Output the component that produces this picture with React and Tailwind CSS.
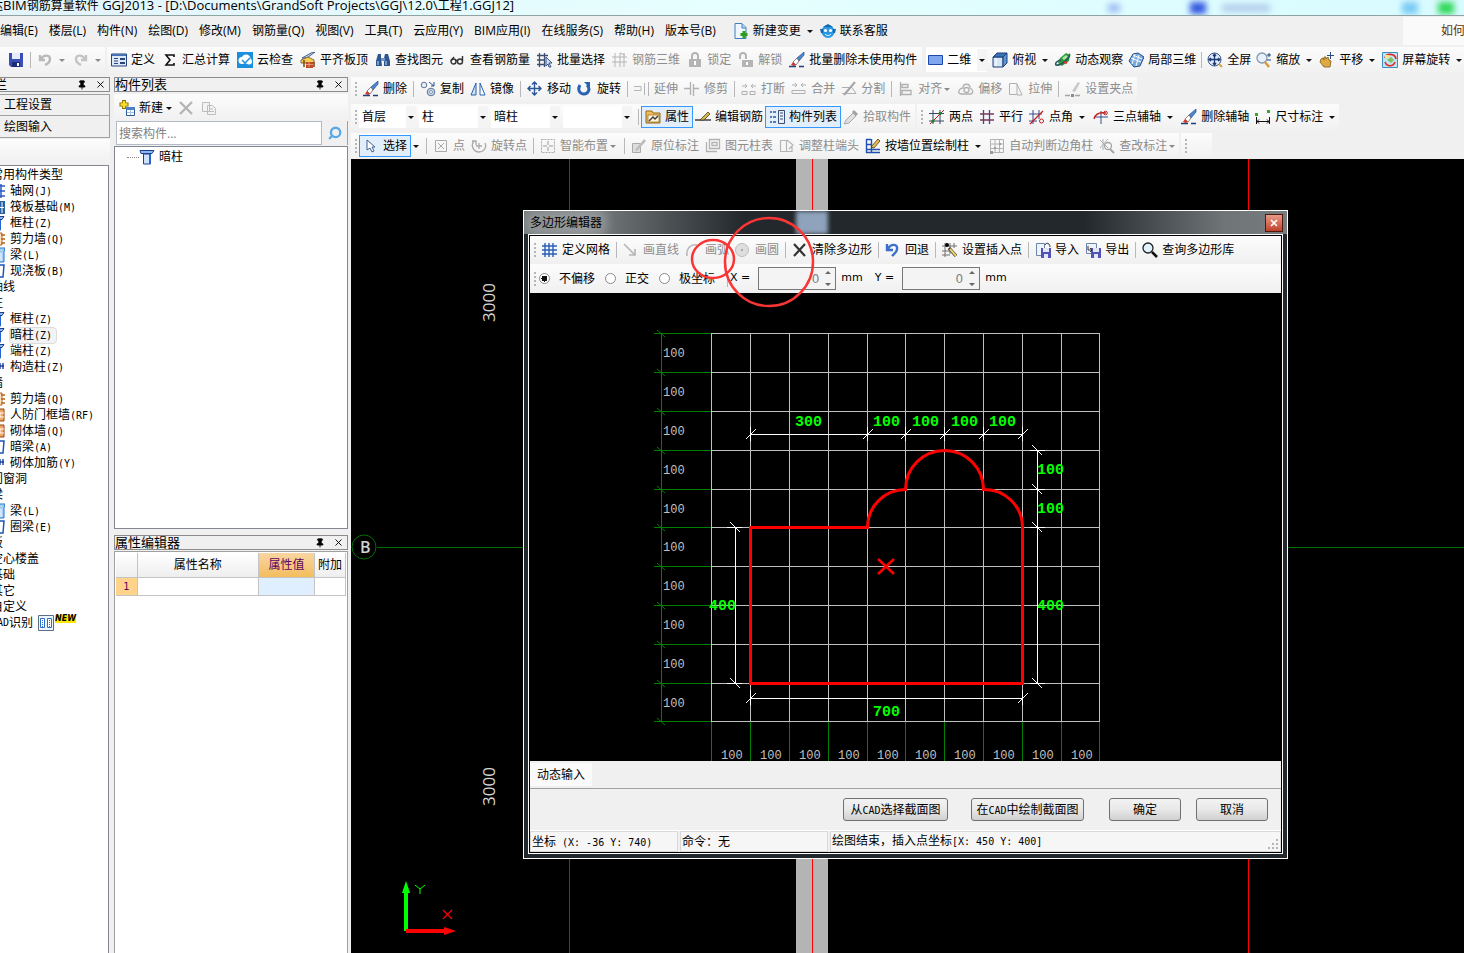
import { useState } from 'react'
import { Search, Pin, X } from 'lucide-react'

// 16x16 toolbar glyphs
const ICONS = {
  save: <><path d="M1 1h14v14H3l-2-2z" fill="#3a4fb5" /><path d="M4 1h8v6H4z" fill="#e8ecfa" /><path d="M4 10h8v5H4z" fill="#1d2c74" /><path d="M9 11h2v3H9z" fill="#fff" /></>,
  undoOff: <path d="M3 3v5h5M4 7c3-5 9-4 9 0 0 4-3 5-5 6" fill="none" stroke="#b9b9b9" strokeWidth="2.4" />,
  redoOff: <path d="M13 3v5H8M12 7C9 2 3 3 3 7c0 4 3 5 5 6" fill="none" stroke="#c4c4c4" strokeWidth="2.4" />,
  define: <><path d="M.5 2h15v12H.5z" fill="#dfe9f8" stroke="#27457d" /><path d="M1 2h14v2H1z" fill="#4872b5" /><path d="M3 6.500h4M3 9h4M3 11.500h4" stroke="#27457d" /><path d="M9 6h5v2H9zM9 10h5v2H9z" fill="#27457d" /></>,
  sigma: <path d="M12 5V3H4l4 5-4 5h8v-2" fill="none" stroke="#111" strokeWidth="1.600" />,
  cloud: <><path d="M0 0h16v16H0z" fill="#1c8ede" /><circle cx="5" cy="8.500" r="3.500" fill="#fff" /><circle cx="9" cy="7" r="4.500" fill="#fff" /><circle cx="12" cy="9.500" r="3" fill="#fff" /><path d="M5 8l3 3 5-5" fill="none" stroke="#1c8ede" strokeWidth="1.500" /></>,
  slab: <><path d="M2 6l9-5 4-1-8 6z" fill="#b9cdea" stroke="#27457d" strokeWidth=".8" /><path d="M1 8l7-3 6 3v3H1z" fill="#f6cf52" stroke="#6d4b10" strokeWidth=".8" /><path d="M4 8v7M14 10v5" stroke="#6d4b10" strokeWidth="1.500" /><path d="M6 10h7v6H6z" fill="#c24a26" /><path d="M6 12.500h7M9 10v5" stroke="#f0b49a" strokeWidth=".7" /></>,
  binoc: <><path d="M3 2h3v4l1 8H1V9zM10 2h3l2 7v5H9V6z" fill="#2f558f" /><path d="M6 6h4v3H6z" fill="#6f94c8" /><path d="M3 9v4M11 9v4" stroke="#cfe0f6" /></>,
  glasses: <g fill="none" stroke="#333" strokeWidth="1.400"><circle cx="3.500" cy="9.500" r="2.500" /><circle cx="10" cy="9.500" r="2.500" /><path d="M5 8.500h3M12.500 9V4M1 9l3-4" /></g>,
  batch: <><path d="M0 3.500h11M0 8h8M0 12.500h8M2.500 1v14M7.500 1v14" stroke="#3c4d6d" fill="none" strokeWidth="1.300" /><path d="M9 5l6 6h-3l2 4-2 0-1-3-2 2z" fill="#cfe0f6" stroke="#27457d" strokeWidth=".9" /></>,
  mesh: <path d="M0 5h15M0 10h15M3 1v14M8 1v14M12 1v14M8 1l5 2" stroke="#b5b5b5" fill="none" />,
  lock: <><path d="M2 7h12v8H2z" fill="#b4b4b4" /><path d="M5 7V4a3 3 0 0 1 6 0v3" fill="none" stroke="#b4b4b4" strokeWidth="2" /><path d="M8 9v4" stroke="#fff" strokeWidth="2" /></>,
  unlock: <><path d="M4 8h11v7H4z" fill="#b4b4b4" /><path d="M2 7V4a3 3 0 0 1 6 0v3" fill="none" stroke="#b4b4b4" strokeWidth="2" /><path d="M9 10v3" stroke="#fff" strokeWidth="2" /></>,
  brush: <><path d="M15 0L8 6l2 3 5-6z" fill="#4b86cf" stroke="#234d8c" strokeWidth=".7" /><path d="M8 6L4 10l3 3 3-4z" fill="#fff" stroke="#555" strokeWidth=".7" /><path d="M4 10l-2 3 3 1 2-1z" fill="#d9362b" /><path d="M0 14.500h7M10 14.500h5" stroke="#1f3f7c" strokeWidth="1.500" /></>,
  rect: <path d="M.5 3.500h14v9H.5z" fill="#7ea6ee" stroke="#1d47a8" />,
  cube: <><path d="M1 5h10v10H1z" fill="#d5e6f9" stroke="#1b3f78" /><path d="M1 5l4-4h10l-4 4z" fill="#3973b4" stroke="#1b3f78" /><path d="M11 5l4-4v10l-4 4z" fill="#5d94d1" stroke="#1b3f78" /><path d="M4 6v8" stroke="#fff" /></>,
  orbit: <><path d="M5 6l6-5 4 2-1 6-7 5-4-3z" fill="#2f9a3d" /><path d="M7 6l4-3 2 2-4 3z" fill="#a9e3a0" /><path d="M14 2C17 4 7 14 1 13c-2-2 3-5 5-5" fill="none" stroke="#235a5a" strokeWidth="1.600" /><path d="M9 10l3 1" stroke="#d9332a" strokeWidth="2" /></>,
  local3d: <><path d="M5 2l5-1 6 4-4 9-6 1-5-6z" fill="#79a9dc" stroke="#1d4c8a" /><path d="M7 2L4 12M11 3L8 14M3 6l10 4M5 3l9 4" stroke="#fff" fill="none" /></>,
  full: <><circle cx="7.500" cy="7.500" r="6.500" fill="#dbe9fa" stroke="#38588b" /><path d="M7.500 2v11M2 7.500h11M6 4l1.500-2L9 4M6 11l1.500 2L9 11M4 6L2 7.500 4 9M11 6l2 1.500L11 9" fill="none" stroke="#1d3970" strokeWidth="1.300" /><path d="M12 12l3 3" stroke="#d6a540" strokeWidth="2" /></>,
  zoom: <><circle cx="6" cy="6" r="5" fill="#e7f1fb" stroke="#8696ac" strokeWidth="1.300" /><path d="M9 10l4 5" stroke="#d39a3b" strokeWidth="2.400" /><path d="M13 1v4M11 3h4M11 8h4" stroke="#26457d" /></>,
  pan: <><path d="M2 7l2-1 1 2V5l2 0v2l2-2 1 3 2 1-1 6H5L1 10z" fill="#dda944" stroke="#805a15" strokeWidth=".8" /><path d="M11.500 0v7M8 3.500h7" stroke="#2b4c82" /></>,
  screen: <><path d="M.5.500h15v15H.5z" fill="#bfe4f7" stroke="#3a8fc2" /><path d="M3 6c1-5 10-5 11 1M13 10c-2 5-8 5-10 0" fill="none" stroke="#e12b20" strokeWidth="1.700" /><path d="M5 8l4-3 3 3-3 3z" fill="#7fc35c" /><path d="M3 3h4v3H3z" fill="#f7e08a" /></>,
  copy: <><circle cx="4" cy="4" r="2.800" fill="#e5edf7" stroke="#5b7597" /><circle cx="11" cy="11" r="3.800" fill="#c9d6e8" stroke="#5b7597" /><circle cx="11" cy="11" r="1.500" fill="#fff" stroke="#5b7597" strokeWidth=".7" /><path d="M9 1l5 4M14 1v4h-3" stroke="#274f90" fill="none" /></>,
  mirror: <><path d="M6 2v12H1z" fill="#cfe0f6" stroke="#2a63ae" /><path d="M10 2v12h5z" fill="#fff" stroke="#2a63ae" /></>,
  move: <path d="M7.500 1v13M1 7.500h13M5 3.500L7.500 1 10 3.500M5 11.500L7.500 14l2.500-2.500M3.500 5L1 7.500 3.500 10M11.500 5L14 7.500 11.500 10" fill="none" stroke="#2b5697" strokeWidth="1.400" />,
  rotate: <><path d="M3 4C0 9 3 13 7 13s7-5 3-9" fill="none" stroke="#2862b5" strokeWidth="3" /><path d="M7 1h6v6z" fill="#2862b5" /></>,
  extend: <path d="M0 5.500h7v4H0M10.500 2v12M14.500 1v14" fill="none" stroke="#b5b5b5" />,
  trim: <path d="M0 7.500h6M10 7.500h5M6.500 1v13M9.500 3v12" fill="none" stroke="#b0b0b0" strokeWidth="1.300" />,
  breakI: <path d="M1 5h5M4 3L6 5 4 7M15 5h-5M12 3l-2 2 2 2M1 10.500h5v3H1zM9 10.500h5v3H9z" fill="none" stroke="#b0b0b0" />,
  merge: <path d="M1 4h5M4 2l2 2-2 2M15 4h-5M12 2l-2 2 2 2M1 9.500h13v3H1z" fill="none" stroke="#b0b0b0" />,
  split: <><path d="M1 6.500h10M1 12.500h14M11 6.500l4 6" fill="none" stroke="#b0b0b0" /><path d="M3 14L14 1" stroke="#a5a5a5" strokeWidth="2" /></>,
  align: <path d="M2.500 1v14M4 3.500h6v3H4zM4 9.500h9v4H4z" fill="none" stroke="#b0b0b0" strokeWidth="1.300" />,
  offset: <g fill="none" stroke="#b0b0b0" strokeWidth="1.300"><path d="M1 12c-1-4 3-5 4-5 0-5 7-5 7 0 3 1 4 6 0 6H3z" /><circle cx="8.500" cy="9" r="2.500" /></g>,
  stretch: <path d="M9 2.500H1.500v11H9M9 3l5 11H9z" fill="none" stroke="#b0b0b0" />,
  grip: <><path d="M0 14.500h5M10 14.500h5" stroke="#a5a5a5" strokeWidth="1.400" /><path d="M6 13h3v3H6z" fill="#8c8c8c" /><path d="M7 10l6-9 2 1-5 9z" fill="#c9c9c9" /></>,
  props: <><path d="M1 2h6l1 2h7v10H1z" fill="#f3bd58" stroke="#94681a" /><path d="M3 6h11v7H3z" fill="#fff6dc" stroke="#94681a" strokeWidth=".7" /><path d="M4 12l4-4 2 2 3-3" stroke="#3f3f3f" strokeWidth="1.500" fill="none" /></>,
  rebar: <><path d="M0 11h16" stroke="#222" strokeWidth="1.300" fill="none" /><path d="M5 11l8-8 2 2-6 6z" fill="#d0b454" stroke="#503f12" strokeWidth=".8" /></>,
  list: <><path d="M1 3h2M1 8h2M1 13h2M4 3h3M4 8h3M4 13h3" stroke="#2754a8" strokeWidth="1.500" /><path d="M9.500 1.500h6v13h-6z" fill="#e7effb" stroke="#3a4d74" /><path d="M11 4h3M11 7h3M11 10h3" stroke="#3a4d74" /></>,
  pick: <><path d="M1 15l2-4 7-7 3 3-7 7z" fill="#e0e0e0" stroke="#a8a8a8" /><path d="M9 3l2-2 4 4-2 2z" fill="#a2a2a2" /></>,
  twoPt: <><path d="M0 4.500h15M0 12h15M4 1v14M11 1v14" stroke="#3b4a6b" /><path d="M1 15L15 1" stroke="#c41f1f" /><circle cx="4" cy="12" r="1.600" fill="#237b23" /><circle cx="11" cy="4.500" r="1.600" fill="#237b23" /></>,
  parallel: <><path d="M4.500 1v14M10.500 1v14" stroke="#3a4b8a" strokeWidth="1.300" /><path d="M1 5h14M1 11h14" stroke="#7a3a5a" strokeWidth="1.300" /></>,
  ptAngle: <><path d="M0 5h13M4 1v14M0 12h8M10 1v9" stroke="#3b4a8b" /><path d="M1 15L14 2" stroke="#c41f1f" fill="none" strokeWidth="1.200" /><circle cx="12.500" cy="12" r="2" fill="none" stroke="#c41f1f" /></>,
  threePt: <><path d="M8 2v13M1 8h14" stroke="#3b4a8b" /><path d="M1 10C2 5 6 3 13 4" stroke="#c41f1f" fill="none" strokeWidth="1.300" /><circle cx="12.500" cy="4" r="1.800" fill="none" stroke="#c41f1f" /></>,
  dim: <><path d="M1.500 8v7M14.500 8v7M2 12.500h12M4 10.500l-2 2 2 2M12 10.500l2 2-2 2" fill="none" stroke="#111" /><path d="M0 4h3v3H0zM12 1h3v3h-3z" fill="#35a835" /></>,
  cursor: <path d="M4 2v10l3-2 2 4 2-1-2-4h3z" fill="#fff" stroke="#3f5f92" />,
  point: <path d="M2.500 2.500h11v11h-11zM5 5l6 6M11 5l-6 6" fill="none" stroke="#a9a9a9" />,
  rotPt: <path d="M3 3c-4 5 0 11 5 11s8-5 6-9M1 3h4v4M8 5v6M5 8h6" fill="none" stroke="#a9a9a9" strokeWidth="1.300" />,
  smart: <><path d="M1.500 1.500h13v13h-13z" fill="none" stroke="#a9a9a9" strokeDasharray="2 1" /><path d="M8 3v4M8 9v4M3 8h4M9 8h4" stroke="#999" /></>,
  inplace: <><path d="M1.500 5.500h8v9h-8z" fill="#ddd" stroke="#aaa" /><path d="M4 12l9-11 2 2-9 10z" fill="#bcbcbc" /></>,
  colTable: <path d="M4.500 1.500h10v9h-10zM7 4.500h5v3H7zM1.500 4v9.500H12M1 13.500h3" fill="none" stroke="#b2b2b2" strokeWidth="1.300" />,
  colEnd: <path d="M1.500 2.500h6v11h-6zM8 2l6 5-4 4M2 13.500h11V8" fill="none" stroke="#b5b5b5" strokeWidth="1.200" />,
  wallCol: <><path d="M1.500 1v14M6.500 1v14M1 1.500h5M1 6.500h5M1 11.500h14M1 14.500h14" stroke="#1f4fb0" fill="none" strokeWidth="1.400" /><path d="M6 9l7-8 2 2-6 7z" fill="#e5bd50" stroke="#4a3a12" strokeWidth=".8" /></>,
  autoCol: <><path d="M1.500 1.500h13v13h-13zM1 6h14M1 10.500h14M6 1v14M10.500 1v14" fill="none" stroke="#b2b2b2" /><path d="M5 9h2v2H5zM10 5h2v2h-2zM1 13h3v3H1z" fill="#9a9a9a" /></>,
  review: <><path d="M1 2l8 8M9 1L1 10M4 1v11" stroke="#b2b2b2" /><circle cx="9" cy="8" r="3.500" fill="none" stroke="#a5a5a5" strokeWidth="1.300" /><path d="M11 11l4 4" stroke="#a5a5a5" strokeWidth="2" /></>,
  newDoc: <><path d="M2 .500h7l4 4v11H2z" fill="#eef6ff" stroke="#3f7fbd" /><path d="M9 1v4h4" fill="#bcd9f3" stroke="#3f7fbd" /><path d="M11 8v7M7.500 11.500h7" stroke="#2f9c1c" strokeWidth="3" /></>,
  service: <><circle cx="8" cy="8.500" r="6.500" fill="#2a97e3" /><path d="M0 6h3v4H1zM13 6h3l-1 4h-2zM3 4l5-3 5 3z" fill="#1467ac" /><circle cx="5.500" cy="7.500" r="1.600" fill="#fff" /><circle cx="10.500" cy="7.500" r="1.600" fill="#fff" /><path d="M5 11c2 2 4 2 6 0" stroke="#fff" fill="none" /></>,
  newComp: <><path d="M5 0v9M.500 4.500h9" stroke="#8a6d00" strokeWidth="4" /><path d="M5 1v7M1.500 4.500h7" stroke="#f8dd2e" strokeWidth="2.400" /><path d="M7.500 7.500h8v8h-8z" fill="#fff" stroke="#2b5697" /><path d="M7 7h9v3H7z" fill="#4b80c7" /><path d="M8 12.500h7M11.500 10v5" stroke="#a9c1e2" /></>,
  del: <path d="M2 2l12 12M14 2L2 14" stroke="#b5b5b5" strokeWidth="2.400" />,
  dup: <path d="M1.500 2.500h7v9h-7zM6.500 5.500h5l3 3v6h-8zM8 9h4M8 11.500h5" fill="#f3f3f3" stroke="#bdbdbd" />,
  column: <><path d="M1 1.500h14l-2 3H2z" fill="#8db8ee" stroke="#1c3f8f" /><path d="M4.500 5h7v10h-7z" fill="#cfe2fb" stroke="#1c3f8f" /><path d="M11 5v10" stroke="#2864cf" strokeWidth="2" /></>,
  axis: <path d="M2 1v14M7 1v14M12 1v14M0 3h16M0 8h16M0 13h16" stroke="#2c5cc4" strokeWidth="1.500" />,
  raft: <><path d="M0 2h16v13H0z" fill="#2a5f9e" /><path d="M4 3v11M9 3v11M13 3v11M1 8.500h14" stroke="#fff" /></>,
  wall: <><path d="M1 2h12v12H1z" fill="#fbe3c4" stroke="#b5651a" /><path d="M12 4h4M12 8h4M12 12h4" stroke="#b5651a" strokeWidth="1.500" /></>,
  brick: <><path d="M1 2h14v12H1z" fill="#f2a766" stroke="#8a4512" /><path d="M1 6h14M1 10h14M6 2v4M11 6v4M6 10v4" stroke="#fff" /></>,
  beam: <><path d="M2 3l4-2h10l-1 4v10H9V6H2z" fill="#a8d0f5" stroke="#2279c9" /><path d="M12 6v8" stroke="#fff" /></>,
  plate: <path d="M3 2h12l-1 12H1z" fill="#fff" stroke="#1c55b5" strokeWidth="1.500" />,
  conn: <path d="M0 7h15M7 2v12M11 4v6M14 4v6" stroke="#1c3fa0" strokeWidth="1.400" />,
  cad: <><path d="M.5.500h15v15H.5z" fill="#eef4fc" stroke="#5d6d85" /><path d="M2.500 3.500h4v9h-4zM9.500 3.500h4v9h-4z" fill="#fff" stroke="#2c6fc7" /><path d="M4.500 5v7M11.500 5v7" stroke="#2c6fc7" strokeDasharray="1 1" /></>,
  gridDef: <path d="M3 1v14M7 1v14M11 1v14M0 4h15M0 8h15M0 12h15" stroke="#2b5fb5" strokeWidth="1.400" />,
  line: <path d="M1 2l11 11M12 7v6H6" fill="none" stroke="#b5b5b5" strokeWidth="1.600" />,
  arc: <path d="M2 14C1 7 5 2 12 3" fill="none" stroke="#b5b5b5" strokeWidth="1.500" />,
  circle: <><circle cx="7" cy="8" r="6.500" fill="#dedede" stroke="#bcbcbc" /><circle cx="7" cy="8" r="1" fill="#999" /></>,
  clear: <path d="M2 2l11 12M13 2L2 14" stroke="#333" strokeWidth="2.200" />,
  back: <path d="M2 2v6h6M3 7C6 1 13 2 12 7c0 3-3 5-5 7" fill="none" stroke="#3a70cc" strokeWidth="2.400" />,
  insert: <><path d="M0 4h15M0 9h10M0 13h8M3 1v14M8 1v11M12 1v5" stroke="#707070" /><circle cx="5" cy="3" r="2" fill="#000" /><path d="M7 6l7 8" stroke="#3b3b3b" strokeWidth="3.400" /><path d="M8 7l6 7" stroke="#eed163" strokeWidth="2" /></>,
  importI: <><path d="M1.500 1.500h8v12h-8z" fill="#eef3fa" stroke="#6f86a8" /><path d="M6 6h10v10H6z" fill="#5252b5" /><path d="M8 6h6v4H8zM9 12h4v4H9z" fill="#e4e4f8" /><path d="M10 3c1-3 5-2 5 2" fill="none" stroke="#333" /></>,
  exportI: <><path d="M1.500 1.500h10v10h-10z" fill="#eef3fa" stroke="#6f86a8" /><path d="M6 6h10v10H6z" fill="#5252b5" /><path d="M8 6h6v4H8zM9 12h4v4H9z" fill="#e4e4f8" /><path d="M3 4v4h4M5 6l2 2-2 2" fill="none" stroke="#333" /></>,
  query: <><circle cx="6" cy="6" r="5" fill="#dff3fc" stroke="#222" strokeWidth="1.300" /><path d="M10 10l5 5" stroke="#111" strokeWidth="2.600" /></>,
}

function Icon({ name }) {
  return (
    <svg width="16" height="16" viewBox="0 0 16 16" className="shrink-0" aria-hidden="true">
      {ICONS[name]}
    </svg>
  )
}

function Caret({ off }) {
  return (
    <svg width="10" height="16" viewBox="0 0 10 16" className="shrink-0" aria-hidden="true">
      <path d="M2 7h6L5 10z" fill={off ? '#8a8a8a' : '#111'} />
    </svg>
  )
}

function Tool({ icon, label, off, caret, active }) {
  return (
    <button
      type="button"
      disabled={off}
      className={`flex shrink-0 items-center gap-1 ${off ? 'text-[#8d8d8d]' : 'text-black'} ${active ? 'h-[22px] -mx-1 border border-[#3399ff] bg-[#e2eefa] px-[3px]' : ''}`}
    >
      {icon && <Icon name={icon} />}
      {label}
      {caret && <span className={off ? '-ml-1' : ''}><Caret off={off} /></span>}
    </button>
  )
}

const Sep = () => <div className="h-4 w-px shrink-0 bg-[#b8b8b8]" />

const Grip = () => (
  <div className="flex w-[2px] shrink-0 flex-col gap-[2px]">
    <i className="h-[2px] bg-[#b5b5b5]" />
    <i className="h-[2px] bg-[#b5b5b5]" />
    <i className="h-[2px] bg-[#b5b5b5]" />
    <i className="h-[2px] bg-[#b5b5b5]" />
  </div>
)

// '|' is a separator, everything else is [icon, label, flags]
function Tools({ items }) {
  return items.map((t, i) =>
    t === '|' ? <Sep key={i} /> : (
      <Tool key={i} icon={t[0]} label={t[1]} off={t[2]?.includes('off')} caret={t[2]?.includes('caret')} active={t[2]?.includes('active')} />
    )
  )
}

function Combo({ label, value, className }) {
  return (
    <div className={`relative flex h-[22px] shrink-0 items-center bg-white ${className}`}>
      <select aria-label={label} className="h-full w-full appearance-none bg-transparent pl-[3px] text-xs outline-none">
        <option>{value}</option>
      </select>
      <span className="pointer-events-none absolute inset-y-0 right-0 flex items-center bg-[#f4f4f4]">
        <Caret />
      </span>
    </div>
  )
}

// half-width characters take a 6px cell beside 12px ideographs
function Song({ children }) {
  return children.split(/([\x20-\x7e]+)/).map((part, i) =>
    i % 2 ? <span key={i} className="whitespace-pre font-['DejaVu_Sans_Mono',monospace] text-[10px]">{part}</span> : part
  )
}

function PanelHead({ title, className = '' }) {
  return (
    <div className={`flex h-[15px] shrink-0 items-center border border-[#8c8c8c] bg-[#f0f0f0] ${className}`}>
      <span className="flex-1 whitespace-nowrap text-[13px] leading-[13px]">{title}</span>
      <button type="button" aria-label="固定" className="mr-2"><Pin size={10} fill="#000" /></button>
      <button type="button" aria-label="关闭" className="mr-[3px]"><X size={11} strokeWidth={2} /></button>
    </div>
  )
}

const MENUS = ['编辑(E)', '楼层(L)', '构件(N)', '绘图(D)', '修改(M)', '钢筋量(Q)', '视图(V)', '工具(T)', '云应用(Y)', 'BIM应用(I)', '在线服务(S)', '帮助(H)', '版本号(B)']

const MAIN_TOOLS = [
  ['define', '定义'], ['sigma', '汇总计算'], ['cloud', '云检查'], ['slab', '平齐板顶'], ['binoc', '查找图元'],
  ['glasses', '查看钢筋量'], ['batch', '批量选择'], ['mesh', '钢筋三维', 'off'], ['lock', '锁定', 'off'],
  ['unlock', '解锁', 'off'], ['brush', '批量删除未使用构件'],
]
const VIEW_TOOLS = [
  ['cube', '俯视', 'caret'], ['orbit', '动态观察'], ['local3d', '局部三维'], '|', ['full', '全屏'],
  ['zoom', '缩放', 'caret'], ['pan', '平移', 'caret'], ['screen', '屏幕旋转', 'caret'],
]
const EDIT_TOOLS = [
  ['brush', '删除'], '|', ['copy', '复制'], ['mirror', '镜像'], '|', ['move', '移动'], ['rotate', '旋转'], '|',
  ['extend', '延伸', 'off'], ['trim', '修剪', 'off'], '|', ['breakI', '打断', 'off'], ['merge', '合并', 'off'],
  ['split', '分割', 'off'], '|', ['align', '对齐', 'off caret'], ['offset', '偏移', 'off'], ['stretch', '拉伸', 'off'],
  '|', ['grip', '设置夹点', 'off'],
]
const COMP_TOOLS = [['props', '属性', 'active'], ['rebar', '编辑钢筋'], ['list', '构件列表', 'active'], ['pick', '拾取构件', 'off']]
const AXIS_TOOLS = [
  ['twoPt', '两点'], ['parallel', '平行'], ['ptAngle', '点角', 'caret'], ['threePt', '三点辅轴', 'caret'],
  ['brush', '删除辅轴'], ['dim', '尺寸标注', 'caret'],
]
const DRAW_TOOLS = [
  '|', ['point', '点', 'off'], ['rotPt', '旋转点', 'off'], '|', ['smart', '智能布置', 'off caret'], '|',
  ['inplace', '原位标注', 'off'], ['colTable', '图元柱表', 'off'], ['colEnd', '调整柱端头', 'off'],
  ['wallCol', '按墙位置绘制柱', 'caret'], ['autoCol', '自动判断边角柱', 'off'], ['review', '查改标注', 'off caret'],
]
const POLY_TOOLS = [
  ['gridDef', '定义网格'], '|', ['line', '画直线', 'off'], ['arc', '画弧', 'off'], ['circle', '画圆', 'off'], '|',
  ['clear', '清除多边形'], '|', ['back', '回退'], '|', ['insert', '设置插入点'], '|', ['importI', '导入'],
  ['exportI', '导出'], '|', ['query', '查询多边形库'],
]

const NAV = [
  [null, '常用构件类型'], ['axis', '轴网(J)'], ['raft', '筏板基础(M)'], ['column', '框柱(Z)'], ['wall', '剪力墙(Q)'],
  ['beam', '梁(L)'], ['plate', '现浇板(B)'], [null, '轴线'], [null, '柱'], ['column', '框柱(Z)'],
  ['column', '暗柱(Z)', true], ['column', '端柱(Z)'], ['conn', '构造柱(Z)'], [null, '墙'], ['wall', '剪力墙(Q)'],
  ['brick', '人防门框墙(RF)'], ['brick', '砌体墙(Q)'], ['plate', '暗梁(A)'], ['conn', '砌体加筋(Y)'], [null, '门窗洞'],
  [null, '梁'], ['beam', '梁(L)'], ['plate', '圈梁(E)'], [null, '板'], [null, '空心楼盖'], [null, '基础'],
  [null, '其它'], [null, '自定义'],
]

const GX = [181, 220, 259, 298, 337, 375, 414, 453, 492, 531, 569]
const GY = [40, 79, 118, 157, 196, 234, 273, 312, 351, 390, 428]

function PolygonCanvas() {
  const dimText = "fill-[#00ff00] font-['Liberation_Mono',monospace] text-[15px] font-bold"
  const topDims = [220, 337, 375, 414, 453, 492]
  const rightDims = [157, 196, 234, 390]
  return (
    <svg viewBox="0 0 751 468" className="block h-[468px] w-full bg-black">
      <g stroke="#c0c0c0" shapeRendering="crispEdges">
        {GX.map((x) => <path key={x} d={`M${x + 0.5} 40V429`} />)}
        {GY.map((y) => <path key={y} d={`M181 ${y + 0.5}H570`} />)}
      </g>
      <g stroke="#008000" fill="none">
        <path d="M131.500 40V429" shapeRendering="crispEdges" />
        {GY.map((y) => <path key={y} d={`M124 ${y + 0.5}H181`} shapeRendering="crispEdges" />)}
        {GY.map((y) => <path key={y} d={`M127 ${y - 3}l8 7`} />)}
        {GX.map((x) => <path key={x} d={`M${x + 0.5} 429V468`} shapeRendering="crispEdges" />)}
      </g>
      <g className="fill-[#c0c0c0] font-['Liberation_Mono',monospace] text-[12px]">
        {GY.slice(0, 10).map((y) => <text key={y} x="133" y={y + 24}>100</text>)}
        {GX.slice(0, 10).map((x) => <text key={x} x={x + 10} y="466">100</text>)}
      </g>
      <g stroke="#fff" fill="none">
        <path d="M220 141.500H493M220 405.500H493M205.500 234V391M507.500 157V391" shapeRendering="crispEdges" />
        {topDims.map((x) => <path key={x} d={`M${x + 0.5} 134v14M${x - 4} 146l10-10`} />)}
        {[220, 492].map((x) => <path key={x} d={`M${x + 0.5} 397v15M${x - 4} 410l10-10`} />)}
        {rightDims.map((y) => <path key={y} d={`M500 ${y + 0.5}h15M502 ${y - 5}l10 10`} />)}
        {[234, 390].map((y) => <path key={y} d={`M197 ${y + 0.5}h15M200 ${y - 5}l10 10`} />)}
      </g>
      <path
        d="M220.500 234.500H337.500A38 38 0 0 1 375.500 196.500A39 39 0 0 1 453.500 196.500A38 38 0 0 1 492.500 234.500V390.500H220.500Z"
        fill="none" stroke="#f00" strokeWidth="3"
      />
      <path d="M348 266l16 15M364 266l-16 15" stroke="#f00" strokeWidth="2.500" />
      <g className={dimText}>
        <text x="265" y="133">300</text>
        {[343, 382, 421, 459].map((x) => <text key={x} x={x} y="133">100</text>)}
        <text x="507" y="181">100</text>
        <text x="507" y="220">100</text>
        <text x="507" y="317">400</text>
        <text x="179" y="317">400</text>
        <text x="343" y="423">700</text>
      </g>
    </svg>
  )
}

function NumberField({ id, label, value, onChange }) {
  return (
    <>
      <label htmlFor={id} className="whitespace-pre">{label} =</label>
      <span className="ml-2 mr-[5px] flex h-[23px] w-[78px] items-center border border-[#777] bg-[#f4f4f4]">
        <input
          id={id}
          value={value}
          onChange={(e) => onChange(e.target.value)}
          className="h-full w-full min-w-0 flex-1 bg-transparent text-right text-xs text-[#808080] outline-none"
        />
        <svg width="16" height="21" viewBox="0 0 16 21" className="shrink-0 fill-[#666]" aria-hidden="true">
          <path d="M6 6h6L9 3zM6 15h6l-3 3z" />
        </svg>
      </span>
      <span>mm</span>
    </>
  )
}

function DialogButton({ children, className }) {
  return (
    <button
      type="button"
      className={`h-[23px] whitespace-nowrap rounded-[3px] border border-[#707070] bg-gradient-to-b from-[#f3f3f3] via-[#e8e8e8] to-[#d0d0d0] ${className}`}
    >
      <Song>{children}</Song>
    </button>
  )
}

function PolygonDialog() {
  const [mode, setMode] = useState('不偏移')
  const [x, setX] = useState('0')
  const [y, setY] = useState('0')
  return (
    <section
      aria-label="多边形编辑器"
      className="absolute left-[172px] top-[51px] w-[765px] border border-white bg-[#22282b] px-1 pb-1"
    >
      <header className="relative -mx-1 flex h-[23px] items-center justify-between overflow-hidden bg-[linear-gradient(90deg,#6f7577_0,#7b8082_60px,#22282b_220px,#22282b_560px,#6f7477_700px,#777c7e_100%)] pl-[6px] pr-1">
        <span className="absolute inset-y-0 left-[272px] w-8 bg-[#8fa3bd] blur-[2px]" />
        <h2 className="relative rounded bg-white/20 text-xs shadow-[0_0_8px_6px_rgba(255,255,255,0.2)]">多边形编辑器</h2>
        <button type="button" aria-label="关闭" className="flex h-[18px] w-[18px] items-center justify-center border border-[#4d1a12] bg-gradient-to-b from-[#e79a87] to-[#c0402a] text-white">
          <X size={10} strokeWidth={4} />
        </button>
      </header>
      <div className="border border-white">
        <div className="border border-black bg-[#f0f0f0]">
          <div className="flex h-7 items-center gap-[6px] overflow-hidden whitespace-nowrap bg-gradient-to-b from-[#fcfcfc] to-[#f0f0f0] pl-1">
            <Grip />
            <Tools items={POLY_TOOLS} />
          </div>
          <div className="flex h-[29px] items-center whitespace-nowrap bg-gradient-to-b from-[#fcfcfc] to-[#f0f0f0] pl-1">
            <Grip />
            <div className="ml-[3px] flex gap-[10px]">
              {['不偏移', '正交', '极坐标'].map((m) => (
                <label key={m} className="flex items-center gap-[9px]">
                  <input
                    type="radio"
                    name="offset"
                    checked={mode === m}
                    onChange={() => setMode(m)}
                    className="h-[11px] w-[11px] appearance-none rounded-full border border-[#8a8a8a] bg-white checked:bg-[radial-gradient(circle,#111_0,#111_3px,#fff_3px)]"
                  />
                  {m}
                </label>
              ))}
            </div>
            <div className="ml-3 mr-[2px] h-4 w-px bg-[#b8b8b8]" />
            <div className="flex items-center font-['DejaVu_Sans',sans-serif] text-[11px]">
              <NumberField id="off-x" label="X" value={x} onChange={setX} />
              <span className="w-3" />
              <NumberField id="off-y" label="Y" value={y} onChange={setY} />
            </div>
          </div>
          <PolygonCanvas />
          <div className="flex h-7 items-center border-b border-[#a0a0a0]">
            <button type="button" className="h-[23px] bg-[#fafafa] px-[7px]">动态输入</button>
          </div>
          <div className="flex h-[41px] items-center justify-end pr-[13px]">
            <DialogButton className="w-[105px]">从CAD选择截面图</DialogButton>
            <DialogButton className="ml-[23px] w-[113px]">在CAD中绘制截面图</DialogButton>
            <DialogButton className="ml-[25px] w-[72px]">确定</DialogButton>
            <DialogButton className="ml-[15px] w-[72px]">取消</DialogButton>
          </div>
          <footer className="flex h-[22px] items-stretch gap-[2px] border-t border-white text-xs leading-[19px]">
            <div className="w-[148px] border border-[#d9d9d9] bg-[#f6f6f6] pl-px"><Song>坐标 (X: -36 Y: 740)</Song></div>
            <div className="w-[148px] border border-[#d9d9d9] bg-[#f6f6f6] pl-px"><Song>命令：无</Song></div>
            <div className="flex flex-1 items-end justify-between border border-[#d9d9d9] bg-[#f6f6f6] pl-px">
              <span><Song>绘图结束，插入点坐标[X: 450 Y: 400]</Song></span>
              <svg width="12" height="12" viewBox="0 0 12 12" className="fill-[#b5b5b5]" aria-hidden="true">
                <path d="M8 0h2v2H8zM4 4h2v2H4zM8 4h2v2H8zM0 8h2v2H0zM4 8h2v2H4zM8 8h2v2H8z" />
              </svg>
            </div>
          </footer>
        </div>
      </div>
      {/* hand-drawn marks over the arc and circle tools */}
      <svg width="130" height="96" viewBox="0 0 130 96" className="pointer-events-none absolute left-[164px] top-[4px]" fill="none" stroke="#f93535" strokeWidth="2.500" aria-hidden="true">
        <ellipse cx="25" cy="44" rx="21" ry="19" />
        <circle cx="81" cy="47" r="44" />
      </svg>
    </section>
  )
}

function Workspace() {
  return (
    <main className="relative mt-px min-h-[794px] flex-1 overflow-hidden bg-black">
      <svg width="100%" height="100%" className="absolute inset-0" aria-hidden="true">
        <rect x="445" y="0" width="32" height="100%" fill="#b4b4b4" />
        <g shapeRendering="crispEdges">
          <line x1="461.500" x2="461.500" y1="0" y2="100%" stroke="#f00" />
          <line x1="897.500" x2="897.500" y1="0" y2="100%" stroke="#f00" />
          <line x1="218.500" x2="218.500" y1="0" y2="100%" stroke="#007000" />
          <line x1="26" x2="100%" y1="388.500" y2="388.500" stroke="#007000" />
        </g>
        <circle cx="13" cy="388" r="12" fill="none" stroke="#007000" />
        <g className="fill-[#d4d4d4] font-['Open_Sans',sans-serif]">
          <text x="9" y="394" className="text-[16px] font-semibold">B</text>
          <text transform="translate(144 163) rotate(-90)" className="text-[17px]">3000</text>
          <text transform="translate(144 647) rotate(-90)" className="text-[17px]">3000</text>
        </g>
        <path d="M55 772v-40" stroke="#0f0" strokeWidth="4" />
        <path d="M55 722l4 12h-8z" fill="#0f0" />
        <path d="M55 772h38" stroke="#f00" strokeWidth="4" />
        <path d="M105 772l-12 4v-8z" fill="#f00" />
        <path d="M64 726l5 4 5-4M69 730v5" stroke="#0f0" fill="none" />
        <path d="M92 751l9 9M101 751l-9 9" stroke="#ff0000" strokeWidth="1.200" fill="none" />
      </svg>
      <PolygonDialog />
    </main>
  )
}

export default function App() {
  const strip = 'flex items-center bg-gradient-to-b from-[#fcfcfc] to-[#f1f1f1]'
  return (
    <div className="flex min-h-screen flex-col overflow-hidden bg-[#f0f0f0] font-['Open_Sans','Noto_Sans_CJK_SC',sans-serif] text-xs text-black">
      <header className="relative flex h-4 items-center overflow-hidden whitespace-nowrap border-b border-[#8fa3a3] bg-gradient-to-r from-[#e3f4fb] via-[#e6ffff] to-[#d8fbff]">
        <h1 className="-ml-[9px] -mt-1 text-[13px]"><span className="text-xs">达</span>BIM<span className="text-xs">钢筋算量软件</span> GGJ2013 - [D:\Documents\GrandSoft Projects\GGJ\12.0\<span className="text-xs">工程</span>1.GGJ12]</h1>
        <div className="ml-auto mr-[10px] flex items-center blur-[3px]" aria-hidden="true">
          <i className="h-2 w-3 bg-[#9ab8f0]" />
          <i className="ml-[70px] h-3 w-4 bg-[#3358e0]" />
          <i className="ml-4 h-2 w-12 bg-[#b4cdea]" />
          <i className="ml-[132px] h-3 w-4 bg-[#79c9f5]" />
          <i className="ml-5 h-3 w-4 bg-[#2fd858]" />
        </div>
      </header>

      <nav className="flex h-[30px] items-center gap-[11px] overflow-hidden whitespace-nowrap">
        {MENUS.map((m) => <button key={m} type="button" className="shrink-0">{m}</button>)}
        <span className="ml-[6px]"><Tool icon="newDoc" label="新建变更" caret /></span>
        <span className="-ml-[6px]"><Tool icon="service" label="联系客服" /></span>
        <a href="#help" className="-mr-px ml-auto flex h-7 shrink-0 items-center bg-[#fafafa] pl-[38px] text-[#663300]">如何</a>
      </nav>

      <div className="mt-px flex h-[26px] overflow-hidden whitespace-nowrap">
        <div className={`${strip} w-[105px] shrink-0 gap-[6px] pl-2`}>
          <button type="button" aria-label="保存"><Icon name="save" /></button>
          <Sep />
          <button type="button" aria-label="撤销" disabled className="flex gap-1"><Icon name="undoOff" /><Caret off /></button>
          <button type="button" aria-label="重做" disabled className="flex gap-1"><Icon name="redoOff" /><Caret off /></button>
        </div>
        <div className={`${strip} ml-[2px] shrink-0 gap-[7px] pl-1 pr-[5px]`}>
          <Tools items={MAIN_TOOLS} />
        </div>
        <div className={`${strip} ml-1 min-w-0 grow gap-[5px]`}>
          <div className="flex h-6 items-center bg-white pl-[2px]">
            <Icon name="rect" />
            <Combo label="视图模式" value="二维" className="w-[43px]" />
          </div>
          <Tools items={VIEW_TOOLS} />
        </div>
      </div>

      <div className="mt-1 flex flex-1">
        {/* navigation */}
        <aside className="flex w-[110px] shrink-0 flex-col overflow-hidden">
          <PanelHead title={<span className="-ml-[58px]">模块导航栏</span>} className="border-l-0" />
          <button type="button" className="mt-[2px] h-[22px] border-b border-r border-t border-[#a0a0a0] pl-1 text-left">工程设置</button>
          <button type="button" className="h-[22px] border-b border-r border-[#a0a0a0] pl-1 text-left">绘图输入</button>
          <div className="mt-px h-[26px] bg-gradient-to-b from-[#fcfcfc] to-[#f0f0f0]" />
          <ul className="mr-px flex-1 border-r border-t border-[#828790] bg-white pt-px">
            {NAV.map(([icon, label, on], i) => (
              <li key={i} className={`-ml-[11px] flex h-4 items-center gap-[5px] whitespace-nowrap ${icon ? '' : 'pl-[2px]'}`}>
                {icon && <Icon name={icon} />}
                <span className={on ? '-my-px -ml-px rounded-sm border border-[#dcdcdc] bg-[#f3f3f3] pr-1 leading-[14px]' : ''}><Song>{label}</Song></span>
              </li>
            ))}
            <li className="-ml-[11px] flex h-4 items-center whitespace-nowrap pl-[2px]">
              <Song>CAD识别</Song>
              <span className="ml-[5px]"><Icon name="cad" /></span>
              <b className="mb-2 ml-px bg-[#ffe800] font-['DejaVu_Sans',sans-serif] text-[8px] italic leading-[8px]">NEW</b>
            </li>
          </ul>
        </aside>

        {/* component list + properties */}
        <aside className="ml-1 flex w-[234px] shrink-0 flex-col">
          <PanelHead title="构件列表" />
          <div className="mt-[2px] flex h-[27px] items-center gap-[7px] bg-gradient-to-b from-[#fcfcfc] to-[#f0f0f0] pl-[5px]">
            <Tool icon="newComp" label="新建" />
            <button type="button" aria-label="新建选项" className="-ml-[6px] -mr-[3px]"><Caret /></button>
            <button type="button" aria-label="删除" disabled><Icon name="del" /></button>
            <button type="button" aria-label="复制" disabled><Icon name="dup" /></button>
          </div>
          <label className="flex h-6 items-center border-r border-[#a0a0a0] pl-[2px]">
            <input aria-label="搜索构件" placeholder="搜索构件..." className="h-full min-w-0 flex-1 border border-[#b5bcc9] bg-white px-[2px] text-xs outline-none placeholder:text-[#808080]" />
            <span className="flex w-[25px] justify-center"><Search size={14} strokeWidth={4} className="-scale-x-100 text-[#5aa9e6]" /></span>
          </label>
          <div className="mt-px h-[383px] border border-[#828790] bg-white">
            <div className="mt-[2px] flex h-4 items-center pl-3">
              <span className="w-3 border-t border-dotted border-[#888]" />
              <Icon name="column" />
              <span className="ml-1">暗柱</span>
            </div>
          </div>
          <PanelHead title="属性编辑器" className="mt-[6px]" />
          <div className="mt-px flex-1 border border-b-0 border-[#a0a0a0] bg-white p-px">
            <table className="w-[230px] table-fixed border-collapse text-center">
              <thead>
                <tr className="h-6 bg-gradient-to-b from-white to-[#eee]">
                  <th className="w-[21px] border border-l-0 border-t-0 border-[#c4c4c4]" />
                  <th className="border border-t-0 border-[#c4c4c4] font-normal">属性名称</th>
                  <th className="w-[56px] border border-t-0 border-[#c4c4c4] bg-gradient-to-b from-[#f8d5a0] to-[#f2bd5c] font-normal text-[#600060]">属性值</th>
                  <th className="w-[31px] border border-t-0 border-[#c4c4c4] font-normal">附加</th>
                </tr>
              </thead>
              <tbody className="leading-4">
                <tr className="h-[18px]">
                  <td className="border border-l-0 border-[#c4c4c4] bg-[#ffd48a] p-0 text-[#600060]"><Song>1</Song></td>
                  <td className="border border-[#c4c4c4]" />
                  <td className="border border-[#c4c4c4] bg-[#e0efff]" />
                  <td className="border border-[#c4c4c4]" />
                </tr>
              </tbody>
            </table>
          </div>
        </aside>

        {/* drawing toolbars and viewport */}
        <div className="ml-[3px] flex min-w-0 flex-1 flex-col overflow-hidden whitespace-nowrap">
          <div className="flex">
            <div className={`${strip} h-6 gap-[6px] pl-1 pr-1`}>
              <Grip />
              <Tools items={EDIT_TOOLS} />
            </div>
          </div>
          <div className="mt-[3px] flex gap-[2px]">
            <div className={`${strip} h-[26px] gap-[6px] pl-1 pr-1`}>
              <Grip />
              <div className="-ml-1 flex gap-[3px]">
                <Combo label="楼层" value="首层" className="w-[57px]" />
                <Combo label="构件类型" value="柱" className="w-[69px]" />
                <Combo label="构件类别" value="暗柱" className="w-[69px]" />
                <Combo label="构件名称" value="" className="w-[69px]" />
              </div>
              <Sep />
              <Tools items={COMP_TOOLS} />
            </div>
            <div className={`${strip} h-[26px] gap-[6px] pl-1 pr-[2px]`}>
              <Grip />
              <Tools items={AXIS_TOOLS} />
            </div>
          </div>
          <div className="mt-[3px] flex gap-[2px]">
            <div className={`${strip} h-[25px] gap-[6px] pl-1 pr-[2px]`}>
              <Grip />
              <Tool icon="cursor" label="选择" active />
              <button type="button" aria-label="选择方式" className="-ml-[2px] -mr-px"><Caret /></button>
              <Tools items={DRAW_TOOLS} />
            </div>
            <div className={`${strip} h-[25px] w-[31px] pl-1`}><Grip /></div>
          </div>
          <Workspace />
        </div>
      </div>
    </div>
  )
}
